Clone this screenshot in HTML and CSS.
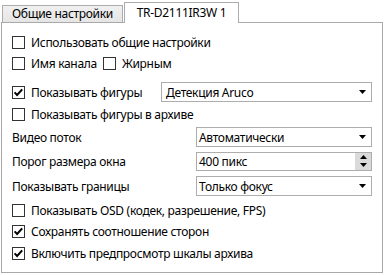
FILE: index.html
```html
<!DOCTYPE html>
<html lang="ru">
<head>
<meta charset="utf-8">
<link rel="stylesheet" href="styles.css">
</head>
<body>
<div class="tabs">
  <div class="tab">Общие настройки</div>
  <div class="tab active">TR-D2111IR3W 1</div>
</div>
<div class="panel">
  <div class="row r1">
    <label class="cb"><span class="box"></span>Использовать общие настройки</label>
  </div>
  <div class="row r2">
    <label class="cb"><span class="box"></span>Имя канала</label>
    <label class="cb second"><span class="box"></span>Жирным</label>
  </div>
  <div class="row r3">
    <label class="cb"><span class="box checked"><svg width="13" height="13" viewBox="0 0 13 13"><path d="M2.6 6.4L5.1 9L10.2 3.4" fill="none" stroke="#000" stroke-width="2"/></svg></span>Показывать фигуры</label>
    <div class="combo wide"><span class="val">Детекция Aruco</span><svg class="arrow" width="7" height="4" viewBox="0 0 7 4"><path d="M0 0H7L3.5 4Z"/></svg></div>
  </div>
  <div class="row r4">
    <label class="cb"><span class="box"></span>Показывать фигуры в архиве</label>
  </div>
  <div class="row r5">
    <span class="lbl">Видео поток</span>
    <div class="combo"><span class="val">Автоматически</span><svg class="arrow" width="7" height="4" viewBox="0 0 7 4"><path d="M0 0H7L3.5 4Z"/></svg></div>
  </div>
  <div class="row r6">
    <span class="lbl">Порог размера окна</span>
    <div class="combo spin"><span class="val">400 пикс</span><span class="spinbtn"><svg width="7" height="12" viewBox="0 0 7 12"><path d="M3.5 0L7 4H0Z"/><path d="M0 8H7L3.5 12Z"/></svg></span></div>
  </div>
  <div class="row r7">
    <span class="lbl">Показывать границы</span>
    <div class="combo"><span class="val">Только фокус</span><svg class="arrow" width="7" height="4" viewBox="0 0 7 4"><path d="M0 0H7L3.5 4Z"/></svg></div>
  </div>
  <div class="row r8">
    <label class="cb"><span class="box"></span>Показывать OSD (кодек, разрешение, FPS)</label>
  </div>
  <div class="row r9">
    <label class="cb"><span class="box checked"><svg width="13" height="13" viewBox="0 0 13 13"><path d="M2.6 6.4L5.1 9L10.2 3.4" fill="none" stroke="#000" stroke-width="2"/></svg></span>Сохранять соотношение сторон</label>
  </div>
  <div class="row r10">
    <label class="cb"><span class="box checked"><svg width="13" height="13" viewBox="0 0 13 13"><path d="M2.6 6.4L5.1 9L10.2 3.4" fill="none" stroke="#000" stroke-width="2"/></svg></span>Включить предпросмотр шкалы архива</label>
  </div>
</div>
</body>
</html>
```

FILE: styles.css
```css
* { box-sizing: border-box; }
body {
  margin: 0;
  background: #fff;
  color: #000;
  font-family: "Noto Sans", sans-serif;
  font-size: 12px;
  letter-spacing: -0.3px;
  width: 386px;
  height: 275px;
  overflow: hidden;
}
.tabs {
  display: flex;
  align-items: flex-end;
  height: 22px;
  padding-left: 2px;
}
.tab {
  width: 121px;
  height: 17px;
  border: 1px solid #acacac;
  border-bottom: none;
  background: linear-gradient(#f0f0f0, #e5e5e5);
  text-align: center;
  line-height: 15px;
}
.tab.active {
  width: 115px;
  height: 21px;
  margin-left: 1px;
  margin-bottom: -1px;
  background: #fff;
  line-height: 19px;
  position: relative;
  z-index: 1;
}
.panel {
  margin-left: 1px;
  width: 382px;
  height: 251px;
  border: 1px solid #a9a9a9;
  padding: 9px 10px 0 10px;
  display: flex;
  flex-direction: column;
}
.row {
  height: 20px;
  display: flex;
  align-items: center;
}
.r2 { margin-top: 1px; }
.r3 { margin-top: 9px; }
.r4 { margin-top: 2px; }
.r5 { margin-top: 3px; }
.r6 { margin-top: 4px; }
.r7 { margin-top: 5px; }
.r8 { margin-top: 4px; }
.r9 { margin-top: 1px; }
.r10 { margin-top: 2px; }
.cb {
  display: flex;
  align-items: center;
  white-space: nowrap;
}
.cb.second { margin-left: 6px; }
.box {
  width: 13px;
  height: 13px;
  border: 1px solid #333;
  background: #fff;
  margin-right: 6px;
  position: relative;
  flex: none;
}
.box svg {
  position: absolute;
  left: -1px;
  top: -1px;
}
.lbl { flex: 1; white-space: nowrap; }
.combo {
  width: 176px;
  height: 20px;
  border: 1px solid #adadad;
  background: #fff;
  display: flex;
  align-items: center;
  padding-left: 2px;
  flex: none;
}
.combo.wide {
  width: 211px;
  margin-left: auto;
  padding-left: 4px;
}
.val { flex: 1; white-space: nowrap; }
.arrow { margin-right: 5px; }
.spin { height: 19px; }
.spinbtn {
  width: 16px;
  height: 17px;
  background: #dadada;
  display: flex;
  align-items: center;
  justify-content: center;
}
```
